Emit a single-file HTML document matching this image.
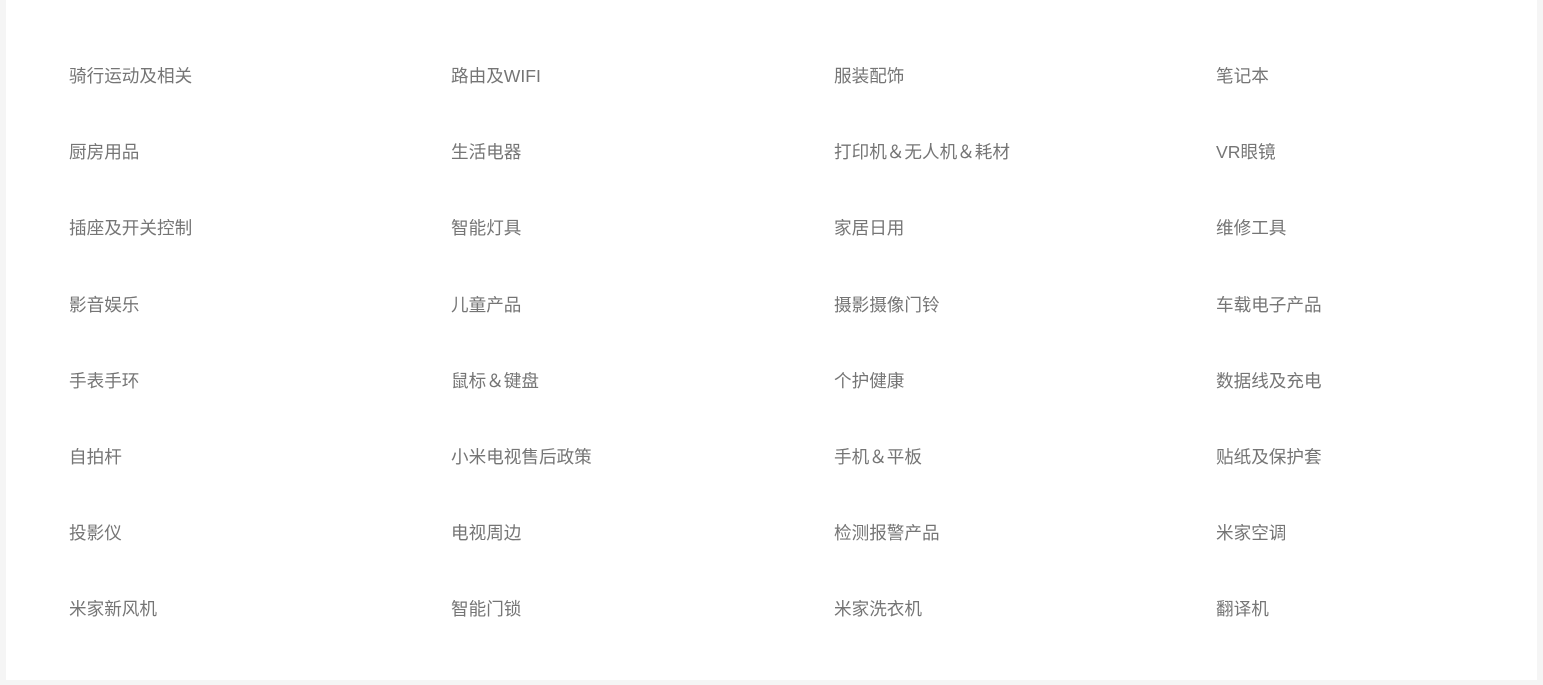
<!DOCTYPE html>
<html><head><meta charset="utf-8"><style>
html,body{margin:0;padding:0;background:#f5f5f5;width:1543px;height:685px;overflow:hidden}
.p{position:absolute;left:6px;top:0;width:1531px;height:680px;background:#fff}
.t{position:absolute;font:17.6px/24px "Liberation Sans","Noto Sans CJK SC",sans-serif;color:#757575;white-space:nowrap}
</style></head><body><div class="p"></div>
<div id="g"></div>
<script>
var d=[["骑行运动及相关","路由及WIFI","服装配饰","笔记本"],["厨房用品","生活电器","打印机＆无人机＆耗材","VR眼镜"],["插座及开关控制","智能灯具","家居日用","维修工具"],["影音娱乐","儿童产品","摄影摄像门铃","车载电子产品"],["手表手环","鼠标＆键盘","个护健康","数据线及充电"],["自拍杆","小米电视售后政策","手机＆平板","贴纸及保护套"],["投影仪","电视周边","检测报警产品","米家空调"],["米家新风机","智能门锁","米家洗衣机","翻译机"]];
var xs=[69,451,834,1216],h="";
d.forEach(function(r,i){r.forEach(function(s,j){h+='<div class="t" style="left:'+xs[j]+'px;top:'+(64+i*76.2)+'px">'+s+'</div>';});});
document.getElementById("g").innerHTML=h;
</script></body></html>
